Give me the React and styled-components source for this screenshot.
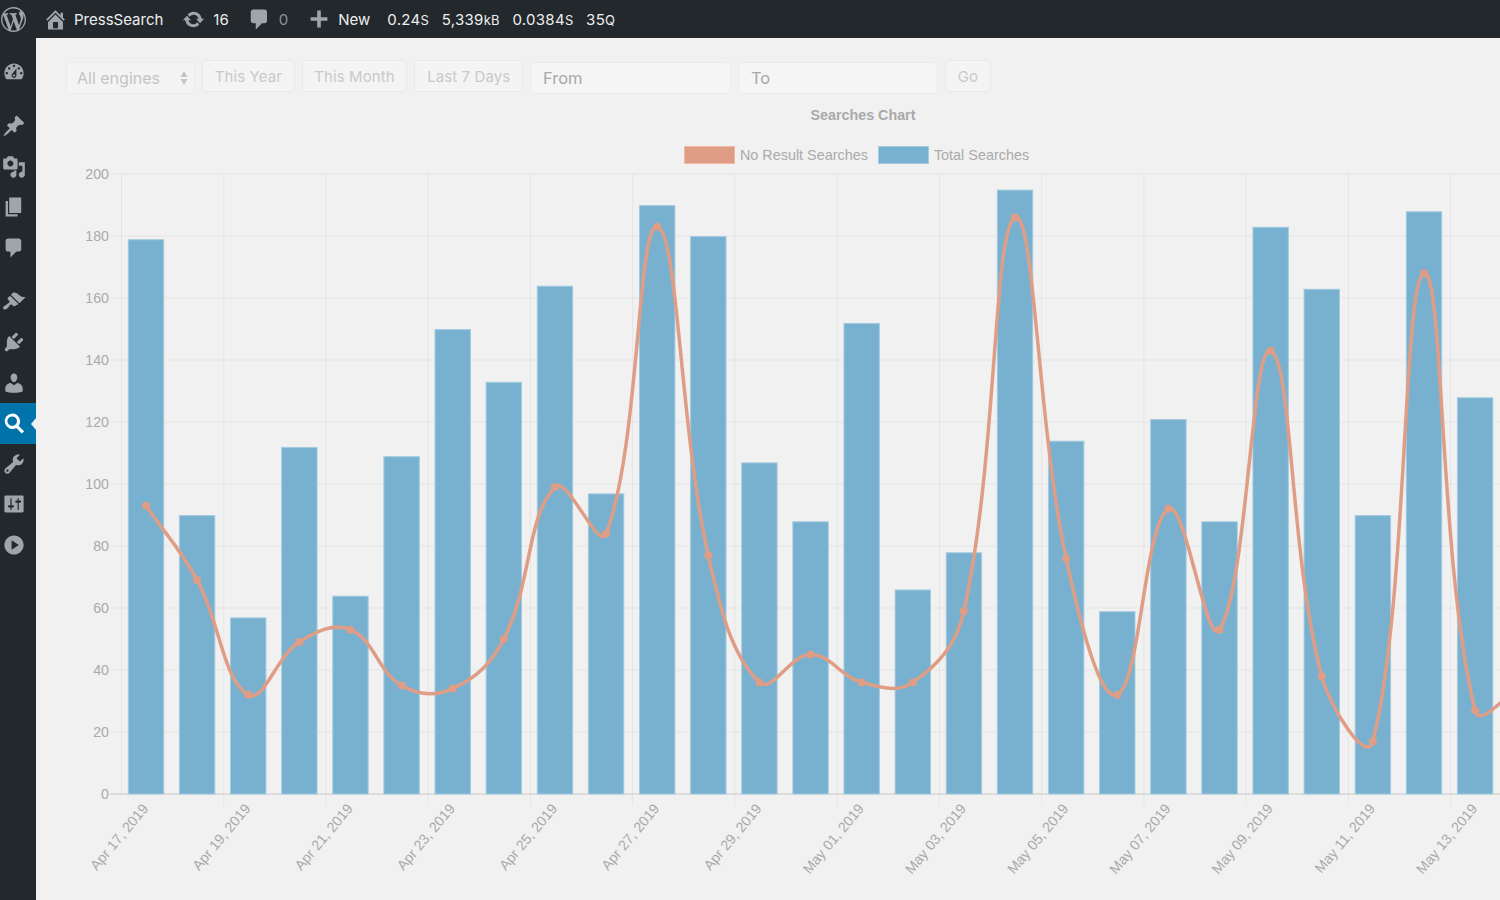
import React from "react"
import styled, { createGlobalStyle } from "styled-components"

const GlobalStyle = createGlobalStyle`
  html, body {
    margin: 0;
    padding: 0;
    height: 100%;
    overflow: hidden;
    background: #f1f1f1;
  }
  * { box-sizing: border-box; }
`

const ICONS = {
  wordpress: "M20 10c0-5.51-4.49-10-10-10C4.48 0 0 4.49 0 10c0 5.52 4.48 10 10 10 5.51 0 10-4.48 10-10zM7.78 15.37L4.37 6.22c.55-.02 1.17-.08 1.17-.08.5-.06.44-1.13-.06-1.11 0 0-1.45.11-2.37.11-.18 0-.37 0-.58-.01C4.12 2.69 6.87 1.11 10 1.11c2.33 0 4.45.87 6.05 2.34-.68-.11-1.65.39-1.65 1.58 0 .74.45 1.36.9 2.1.35.61.55 1.36.55 2.46 0 1.49-1.4 5-1.4 5l-3.03-8.37c.54-.02.82-.17.82-.17.5-.05.44-1.25-.06-1.22 0 0-1.44.12-2.38.12-.87 0-2.33-.12-2.33-.12-.5-.03-.56 1.2-.06 1.22l.92.08 1.26 3.41zM17.41 10c.24-.64.74-1.87.43-4.25.7 1.29 1.05 2.71 1.05 4.25 0 3.29-1.73 6.24-4.4 7.78.97-2.59 1.94-5.2 2.92-7.78zM6.1 18.09C3.12 16.65 1.11 13.53 1.11 10c0-1.3.23-2.48.72-3.59C3.25 10.3 4.67 14.2 6.1 18.09zm4.03-6.63l2.58 6.98c-.86.29-1.76.45-2.71.45-.79 0-1.57-.11-2.29-.33.81-2.38 1.62-4.74 2.42-7.1z",
  home: "M16 8.5l1.53 1.53-1.06 1.06L10 4.62l-6.47 6.47-1.06-1.06L10 2.5l4 4v-2h2v4zm-6-2.46l6 5.99V18H4v-6.03zM12 17v-5H8v5h4z",
  update: "M10.2 3.28c3.53 0 6.43 2.61 6.92 6h2.08l-3.5 4-3.5-4h2.32c-.45-1.97-2.21-3.45-4.32-3.45-1.45 0-2.73.71-3.54 1.78L4.95 5.66C6.23 4.2 8.11 3.28 10.2 3.28zm-.4 13.44c-3.52 0-6.43-2.61-6.92-6H.8l3.5-4c1.17 1.33 2.33 2.67 3.5 4H5.48c.45 1.97 2.21 3.45 4.32 3.45 1.45 0 2.73-.71 3.54-1.78l1.71 1.95c-1.28 1.46-3.15 2.38-5.25 2.38z",
  comment: "M5 2h9c1.1 0 2 .9 2 2v7c0 1.1-.9 2-2 2h-2l-5 5v-5H5c-1.1 0-2-.9-2-2V4c0-1.1.9-2 2-2z",
  plus: "M8.5 3h3v5.5H17v3h-5.5V17h-3v-5.5H3v-3h5.5z",
  dashboard: "M3.76 16h12.48c1.1-1.37 1.76-3.11 1.76-5 0-4.42-3.58-8-8-8s-8 3.58-8 8c0 1.89.66 3.63 1.76 5zM10 4c.55 0 1 .45 1 1s-.45 1-1 1-1-.45-1-1 .45-1 1-1zM6 6c.55 0 1 .45 1 1s-.45 1-1 1-1-.45-1-1 .45-1 1-1zm8 0c.55 0 1 .45 1 1s-.45 1-1 1-1-.45-1-1 .45-1 1-1zm-5.37 5.55L12 7v6c0 1.1-.9 2-2 2s-2-.9-2-2c0-.57.24-1.08.63-1.45zM4 10c.55 0 1 .45 1 1s-.45 1-1 1-1-.45-1-1 .45-1 1-1zm12 0c.55 0 1 .45 1 1s-.45 1-1 1-1-.45-1-1 .45-1 1-1zm-5 3c0-.55-.45-1-1-1s-1 .45-1 1 .45 1 1 1 1-.45 1-1z",
  post: "M10.44 3.02l1.82-1.82 6.36 6.35-1.83 1.82c-1.05-.68-2.48-.57-3.41.36l-.75.75c-.92.93-1.04 2.35-.35 3.41l-1.83 1.82-2.41-2.41-2.8 2.79c-.42.42-3.38 2.71-3.8 2.29s1.86-3.39 2.28-3.81l2.79-2.79L4.1 9.36l1.83-1.82c1.05.69 2.48.57 3.4-.36l.75-.75c.93-.92 1.05-2.35.36-3.41z",
  media: "M13 11V4c0-.55-.45-1-1-1h-1.67L9 1H5L3.67 3H2c-.55 0-1 .45-1 1v7c0 .55.45 1 1 1h10c.55 0 1-.45 1-1zM7 4.5c1.38 0 2.5 1.12 2.5 2.5S8.38 9.5 7 9.5 4.5 8.38 4.5 7 5.62 4.5 7 4.5zM14 6h5v10.5c0 1.38-1.12 2.5-2.5 2.5S14 17.88 14 16.5s1.12-2.5 2.5-2.5c.17 0 .34.02.5.05V9h-3V6zm-4 8.05V13h2v3.5c0 1.38-1.12 2.5-2.5 2.5S7 17.88 7 16.5 8.12 14 9.5 14c.17 0 .34.02.5.05z",
  page: "M6 15V2h10v13H6zm-1 1h8v2H3V5h2v11z",
  appearance: "M14.48 11.06L7.41 3.99l1.5-1.5c.5-.56 2.3-.47 3.51.32 1.21.8 1.43 1.28 2.91 2.1 1.18.64 2.45 1.26 4.45.85zm-.71.71L6.7 4.7 4.93 6.47c-.39.39-.39 1.02 0 1.41l1.06 1.06c.39.39.39 1.03 0 1.42-.6.6-1.43 1.11-2.21 1.69-.35.26-.7.53-1.01.84C1.43 13.23.4 14.93 1.37 15.9c.98.98 2.67-.07 3.01-.39.31-.31.59-.66.85-1.01.58-.78 1.08-1.61 1.69-2.21.39-.39 1.02-.39 1.41 0l1.06 1.06c.39.39 1.02.39 1.41 0z",
  plugins: "M13.11 4.36L9.87 7.6 8 5.73l3.24-3.24c.35-.34 1.05-.2 1.56.32.52.51.66 1.21.31 1.55zm-8 1.77l.91-1.12 9.01 9.01-1.19.84c-.71.71-2.63 1.16-3.82 1.16H6.14L4.9 17.26c-.59.59-1.54.59-2.12 0-.59-.58-.59-1.53 0-2.12l1.24-1.24v-3.88c0-1.13.4-3.19 1.09-3.89zm7.26 3.97l3.24-3.24c.34-.35 1.04-.21 1.55.31.52.51.66 1.21.31 1.55l-3.24 3.25z",
  users: "M10 9.25c-2.27 0-2.73-3.44-2.73-3.44C7 4.02 7.82 2 9.97 2c2.16 0 2.98 2.02 2.71 3.81 0 0-.41 3.44-2.68 3.44zm0 2.57L12.72 10c2.39 0 4.52 2.33 4.52 4.53v2.49s-3.65 1.13-7.24 1.13c-3.65 0-7.24-1.13-7.24-1.13v-2.49c0-2.25 1.94-4.48 4.47-4.48z",
  search: "M8.500 2a6.500 6.500 0 0 1 5.300 10.300l4.600 4.600-1.900 1.900-4.600-4.600A6.500 6.500 0 1 1 8.500 2zm0 2.500a4 4 0 1 0 0 8 4 4 0 0 0 0-8z",
  tools: "M16.68 9.77c-1.34 1.34-3.3 1.67-4.95.99l-5.41 6.52c-.99.99-2.59.99-3.58 0s-.99-2.59 0-3.57l6.52-5.42c-.68-1.65-.35-3.61.99-4.95 1.28-1.28 3.12-1.62 4.72-1.06l-2.89 2.89 2.82 2.82 2.86-2.87c.53 1.58.18 3.39-1.08 4.65zM3.81 16.21c.4.39 1.04.39 1.43 0 .4-.4.4-1.04 0-1.43-.39-.4-1.03-.4-1.43 0-.39.39-.39 1.03 0 1.43z",
  settings: "M18 16V4c0-.55-.45-1-1-1H3c-.55 0-1 .45-1 1v12c0 .55.45 1 1 1h14c.55 0 1-.45 1-1zM8 11h1c.55 0 1 .45 1 1s-.45 1-1 1H8v1.5c0 .28-.22.5-.5.5s-.5-.22-.5-.5V13H6c-.55 0-1-.45-1-1s.45-1 1-1h1V5.5c0-.28.22-.5.5-.5s.5.22.5.5V11zm5-2h-1c-.55 0-1-.45-1-1s.45-1 1-1h1V5.5c0-.28.22-.5.5-.5s.5.22.5.5V7h1c.55 0 1 .45 1 1s-.45 1-1 1h-1v5.5c0 .28-.22.5-.5.5s-.5-.22-.5-.5V9z",
  play: "M10 2c4.42 0 8 3.58 8 8s-3.58 8-8 8-8-3.58-8-8 3.58-8 8-8zm-2 12l6-4-6-4v8z",
}

const Icon = ({ name, size = 20 }) => (
  <svg width={size} height={size} viewBox="0 0 20 20" fill="currentColor" fillRule="evenodd">
    <path d={ICONS[name]} />
  </svg>
)

const Page = styled.div`
  width: 1500px;
  height: 900px;
  display: flex;
  flex-direction: column;
  overflow: hidden;
  background: #f1f1f1;
`

const AdminBar = styled.header`
  height: 38px;
  flex: none;
  display: flex;
  align-items: center;
  background: #23282d;
  color: #eee;
  font-family: Inter, "Liberation Sans", sans-serif;
  font-size: 15px;
  white-space: nowrap;
`

const BarIcon = styled.span`
  display: flex;
  color: #a0a5aa;
  margin-left: ${props => props.$left}px;
  margin-right: ${props => props.$right}px;
`

const BarText = styled.span`
  margin-right: ${props => props.$right || 0}px;
  color: ${props => (props.$muted ? "#8f9498" : "#eee")};
`

const Metric = styled(BarText)`
  letter-spacing: 0.3px;
`

const Unit = styled.span`
  font-size: 13px;
`

const Body = styled.div`
  flex: 1;
  display: flex;
  min-height: 0;
`

const Sidebar = styled.nav`
  width: 36px;
  flex: none;
  padding-top: 14px;
  background: #23282d;
  display: flex;
  flex-direction: column;
`

const MenuItem = styled.div`
  position: relative;
  height: 40.5px;
  margin-top: ${props => (props.$gap ? 13.5 : 0)}px;
  display: flex;
  align-items: center;
  padding-left: 2px;
  color: ${props => (props.$active ? "#fff" : "#a0a5aa")};
  background: ${props => (props.$active ? "#0073aa" : "transparent")};

  ${props =>
    props.$active &&
    `&::after {
      content: "";
      position: absolute;
      right: 0;
      top: 14.5px;
      border: 6px solid transparent;
      border-left-width: 0;
      border-right-width: 5px;
      border-right-color: #f1f1f1;
    }`}
`

const Main = styled.main`
  flex: 1;
  min-width: 0;
  overflow: hidden;
  padding: 22px 0 0 30px;
`

const Filters = styled.form`
  display: flex;
  align-items: flex-start;
  gap: 7px;
  height: 34px;
  font-family: Inter, "Liberation Sans", sans-serif;
`

const EngineSelect = styled.div`
  width: 129px;
  height: 32px;
  margin-top: 2px;
  padding: 0 5px 0 10px;
  display: flex;
  align-items: center;
  justify-content: space-between;
  background: #f4f4f4;
  border: 1px solid #ececec;
  border-radius: 4px;
  color: #c4c4c4;
  font-size: 16px;
`

const FilterButton = styled.button`
  height: 32px;
  padding: 0 11.7px;
  background: #f4f4f4;
  border: 1px solid #e9e9e9;
  border-radius: 3px;
  color: #c9c9c9;
  font-family: inherit;
  font-size: 15px;
  letter-spacing: 0.1px;
`

const DateInput = styled.input`
  width: ${props => props.$width}px;
  height: 32px;
  margin-top: 2px;
  padding: 0 12px;
  background: #f5f5f5;
  border: 1px solid #ececec;
  border-radius: 4px;
  font-family: inherit;
  font-size: 16.5px;

  &::placeholder {
    color: #a8a8a8;
    opacity: 1;
  }
`

const ChartBox = styled.section`
  width: 1594px;
`

const ChartTitle = styled.h2`
  margin: 13px 0 0;
  height: 16px;
  text-align: center;
  font: bold 14.3px/16px "Liberation Sans", Arial, sans-serif;
  color: #a9a9a9;
`

const Legend = styled.div`
  margin-top: 23px;
  height: 18px;
  padding-right: 13px;
  display: flex;
  justify-content: center;
  gap: 10px;
  font: 14.4px/18px "Liberation Sans", Arial, sans-serif;
  color: #aaa;
`

const LegendEntry = styled.span`
  display: flex;
  align-items: center;
  gap: 5px;
`

const Swatch = styled.i`
  width: 51px;
  height: 18px;
  background: ${props => props.$color};
  border: 1px solid ${props => props.$edge};
`

const Plot = styled.svg`
  display: block;
  overflow: hidden;
`

const GridLine = styled.line`
  stroke: #000;
  stroke-opacity: 0.05;
  stroke-width: 1;
`

const AxisLine = styled.line`
  stroke: #000;
  stroke-opacity: 0.17;
  stroke-width: 1;
`

const Bar = styled.rect`
  fill: #78b1cf;
  stroke: #a2cbe0;
  stroke-width: 1;
`

const TrendLine = styled.path`
  fill: none;
  stroke: #e09d85;
  stroke-width: 3.5;
`

const TrendDot = styled.circle`
  fill: #e09d85;
`

const TickLabel = styled.text`
  font: 14.2px "Liberation Sans", Arial, sans-serif;
  fill: #aaa;
`

const totals = [179, 90, 57, 112, 64, 109, 150, 133, 164, 97, 190, 180, 107, 88, 152, 66, 78, 195, 114, 59, 121, 88, 183, 163, 90, 188, 128]
const noResults = [93, 69, 32, 49, 53, 35, 34, 50, 99, 84, 183, 77, 36, 45, 36, 36, 59, 186, 76, 32, 92, 53, 143, 38, 17, 168, 27, 36]
const dates = ["Apr 17", "Apr 19", "Apr 21", "Apr 23", "Apr 25", "Apr 27", "Apr 29", "May 01", "May 03", "May 05", "May 07", "May 09", "May 11", "May 13"]
const yTicks = [0, 20, 40, 60, 80, 100, 120, 140, 160, 180, 200]

const STEP = 51.12
const FIRST = 146
const GRID_START = 121.5
const BOTTOM = 794
const UNIT = 3.1

const xAt = i => FIRST + STEP * i
const yAt = v => BOTTOM - v * UNIT

// same curve as chart.js line tension 0.4
function splinePath(values) {
  const pts = values.map((v, i) => ({ x: xAt(i), y: yAt(v) }))
  const ctrl = pts.map((p, i) => {
    const prev = pts[i - 1] || p
    const next = pts[i + 1] || p
    const d01 = Math.hypot(p.x - prev.x, p.y - prev.y)
    const d12 = Math.hypot(next.x - p.x, next.y - p.y)
    const sum = d01 + d12 || 1
    const fa = (0.4 * d01) / sum
    const fb = (0.4 * d12) / sum
    return {
      px: p.x - fa * (next.x - prev.x),
      py: p.y - fa * (next.y - prev.y),
      nx: p.x + fb * (next.x - prev.x),
      ny: p.y + fb * (next.y - prev.y),
    }
  })
  let d = `M${pts[0].x} ${pts[0].y}`
  for (let i = 1; i < pts.length; i++) {
    d += `C${ctrl[i - 1].nx} ${ctrl[i - 1].ny} ${ctrl[i].px} ${ctrl[i].py} ${pts[i].x} ${pts[i].y}`
  }
  return d
}

function SearchesPlot() {
  return (
    <Plot width="1594" height="736" viewBox="66 164 1594 736">
      {yTicks.map(v => (
        <g key={v}>
          {v === 0 ? (
            <AxisLine x1="110" x2="1660" y1={yAt(v)} y2={yAt(v)} />
          ) : (
            <GridLine x1="110" x2="1660" y1={yAt(v)} y2={yAt(v)} />
          )}
          <TickLabel x="109" y={yAt(v) + 5} textAnchor="end">
            {v}
          </TickLabel>
        </g>
      ))}
      {dates.map((date, i) => {
        const gridX = GRID_START + STEP * 2 * i
        const labelX = FIRST + STEP * 2 * i + 3
        return (
          <g key={date}>
            <GridLine x1={gridX} x2={gridX} y1="174" y2={i === 0 ? BOTTOM : 806} />
            <TickLabel x={labelX} y="809" textAnchor="end" transform={`rotate(-50 ${labelX} 809)`}>
              {date}, 2019
            </TickLabel>
          </g>
        )
      })}
      {totals.map((v, i) => (
        <Bar key={i} x={xAt(i) - 17.7} y={yAt(v) + 0.6} width="35.4" height={v * UNIT - 0.6} />
      ))}
      <TrendLine d={splinePath(noResults)} />
      {noResults.map((v, i) => (
        <TrendDot key={i} cx={xAt(i)} cy={yAt(v)} r="4" />
      ))}
    </Plot>
  )
}

const menu = [
  { icon: "dashboard" },
  { icon: "post", gap: true },
  { icon: "media" },
  { icon: "page" },
  { icon: "comment" },
  { icon: "appearance", gap: true },
  { icon: "plugins" },
  { icon: "users" },
  { icon: "search", active: true },
  { icon: "tools" },
  { icon: "settings" },
  { icon: "play" },
]

export default function App() {
  return (
    <Page>
      <GlobalStyle />
      <AdminBar>
        <BarIcon $left={1} $right={0}>
          <Icon name="wordpress" size={25} />
        </BarIcon>
        <BarIcon $left={16.5} $right={6.5}>
          <Icon name="home" size={25} />
        </BarIcon>
        <BarText $right={18.5}>PressSearch</BarText>
        <BarIcon $left={0} $right={8.5}>
          <Icon name="update" size={23} />
        </BarIcon>
        <BarText $right={18.5}>16</BarText>
        <BarIcon $left={0} $right={6.5}>
          <Icon name="comment" size={25} />
        </BarIcon>
        <BarText $muted $right={19}>0</BarText>
        <BarIcon $left={0} $right={7}>
          <Icon name="plus" size={24} />
        </BarIcon>
        <BarText $right={17}>New</BarText>
        <Metric $right={12.5}>0.24<Unit>S</Unit></Metric>
        <Metric $right={12.5}>5,339<Unit>kB</Unit></Metric>
        <Metric $right={12.5}>0.0384<Unit>S</Unit></Metric>
        <Metric>35<Unit>Q</Unit></Metric>
      </AdminBar>
      <Body>
        <Sidebar>
          {menu.map(item => (
            <MenuItem key={item.icon} $gap={item.gap} $active={item.active}>
              <Icon name={item.icon} size={24} />
            </MenuItem>
          ))}
        </Sidebar>
        <Main>
          <Filters>
            <EngineSelect>
              All engines
              <svg width="10" height="16" viewBox="0 0 10 16" fill="#c4c4c4">
                <path d="M5 1l3.500 6h-7zM5 15L1.500 9h7z" />
              </svg>
            </EngineSelect>
            <FilterButton type="button">This Year</FilterButton>
            <FilterButton type="button">This Month</FilterButton>
            <FilterButton type="button">Last 7 Days</FilterButton>
            <DateInput $width={201} placeholder="From" />
            <DateInput $width={200} placeholder="To" />
            <FilterButton type="button">Go</FilterButton>
          </Filters>
          <ChartBox>
            <ChartTitle>Searches Chart</ChartTitle>
            <Legend>
              <LegendEntry>
                <Swatch $color="#e09d85" $edge="#eeb9a5" />
                No Result Searches
              </LegendEntry>
              <LegendEntry>
                <Swatch $color="#78b1cf" $edge="#a2cbe0" />
                Total Searches
              </LegendEntry>
            </Legend>
            <SearchesPlot />
          </ChartBox>
        </Main>
      </Body>
    </Page>
  )
}
